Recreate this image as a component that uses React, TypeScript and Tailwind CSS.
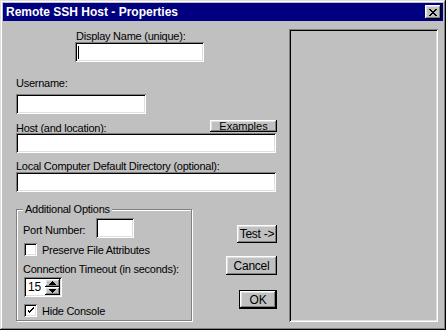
import React from 'react';

const raised =
  'bg-[#c0c0c0] shadow-[inset_-1px_-1px_#000,inset_1px_1px_#fff,inset_-2px_-2px_#808080,inset_2px_2px_#dfdfdf]';
const sunken =
  'shadow-[inset_1px_1px_#808080,inset_-1px_-1px_#fff,inset_2px_2px_#000,inset_-2px_-2px_#dfdfdf]';

const TextBox = ({ className = '', cursor = false }: { className?: string; cursor?: boolean }) => (
  <div className={`bg-white h-[20px] ${sunken} ${className} flex items-center`}>
    {cursor && <div className="ml-[3px] w-px h-[13px] bg-black" />}
  </div>
);

const Button = ({ label, className = '' }: { label: string; className?: string }) => (
  <button className={`${raised} flex items-center justify-center leading-none ${className}`}>{label}</button>
);

const CheckBox = ({ checked = false }: { checked?: boolean }) => (
  <div className={`w-[13px] h-[13px] bg-white ${sunken} flex items-center justify-center shrink-0`}>
    {checked && (
      <svg width="7" height="7" viewBox="0 0 7 7" shapeRendering="crispEdges">
        <path d="M0 2h1v3h1v1h1v-1h1v-1h1v-1h1v-1h1v-2h-1v1h-1v1h-1v1h-1v1h-1v-1h-1v-1h-1z" fill="#000" />
      </svg>
    )}
  </div>
);

const Spinner = () => (
  <div className={`w-[38px] h-[20px] bg-white ${sunken} flex p-[2px]`}>
    <span className="flex-1 pl-[2px] text-[12px] leading-[16px]">15</span>
    <div className="w-[15px] flex flex-col">
      <div className={`${raised} flex-1 flex items-center justify-center`}>
        <svg width="7" height="4" viewBox="0 0 7 4" shapeRendering="crispEdges">
          <path d="M3 0h1v1h1v1h1v1h1v1h-7v-1h1v-1h1v-1h1z" fill="#000" />
        </svg>
      </div>
      <div className={`${raised} flex-1 flex items-center justify-center`}>
        <svg width="7" height="4" viewBox="0 0 7 4" shapeRendering="crispEdges">
          <path d="M0 0h7v1h-1v1h-1v1h-1v1h-1v-1h-1v-1h-1v-1h-1z" fill="#000" />
        </svg>
      </div>
    </div>
  </div>
);

export default function App() {
  return (
    <div
      className="w-[446px] h-[330px] bg-[#c0c0c0] p-[3px] flex flex-col text-[11px] tracking-[-0.25px] text-black font-['Liberation_Sans',Arial,sans-serif] shadow-[inset_-1px_-1px_#000,inset_1px_1px_#dfdfdf,inset_-2px_-2px_#808080,inset_2px_2px_#fff]"
    >
      {/* title bar */}
      <div className="h-[18px] bg-[#000080] flex items-center justify-between pl-[3px] pr-[2px]">
        <span className="text-white font-bold text-[12px] tracking-normal leading-none">Remote SSH Host - Properties</span>
        <div className={`${raised} w-[16px] h-[14px] flex items-center justify-center`}>
          <svg width="8" height="7" viewBox="0 0 8 7" shapeRendering="crispEdges">
            <path d="M0 0h2v1h1v1h2v-1h1v-1h2v1h-1v1h-1v1h-1v1h1v1h1v1h1v1h-2v-1h-1v-1h-2v1h-1v1h-2v-1h1v-1h1v-1h1v-1h-1v-1h-1v-1h-1z" fill="#000" />
          </svg>
        </div>
      </div>

      {/* body */}
      <div className="flex flex-1 pt-[8px] pl-[13px] pr-[5px] pb-[5px]">
        <div className="w-[261px] flex flex-col">
          <div className="ml-[59px] flex flex-col">
            <label className="mt-[1px] pl-[1px] leading-[12px]">Display Name (unique):</label>
            <TextBox className="w-[129px]" cursor />
          </div>

          <label className="mt-[15px] leading-[12px]">Username:</label>
          <TextBox className="w-[130px] mt-[5px]" />

          <div className="mt-[6px] h-[13px] flex justify-between items-start">
            <label className="pt-[2px] leading-[12px]">Host (and location):</label>
            <Button label="Examples" className="w-[67px] h-[12px] pt-px tracking-normal" />
          </div>
          <TextBox className="w-[260px]" />

          <label className="mt-[7px] leading-[12px]">Local Computer Default Directory (optional):</label>
          <TextBox className="w-[260px]" />

          <div className="mt-[17px] flex">
            {/* group box */}
            <div className="relative w-[176px] h-[112px] border border-[#808080] shadow-[inset_1px_1px_#fff,1px_1px_#fff] pl-[6px] flex flex-col">
              <span className="absolute -top-[7px] left-[6px] px-[2px] bg-[#c0c0c0] leading-[12px]">Additional Options</span>
              <div className="mt-[8px] flex items-end">
                <span className="mb-[2px] leading-[12px] w-[73px]">Port Number:</span>
                <TextBox className="w-[38px]" />
              </div>
              <div className="mt-[5px] ml-px flex items-center gap-[5px]">
                <CheckBox />
                <span className="leading-[12px]">Preserve File Attributes</span>
              </div>
              <label className="mt-[7px] leading-[12px]">Connection Timeout (in seconds):</label>
              <div className="mt-[2px] ml-px">
                <Spinner />
              </div>
              <div className="mt-[7px] ml-px flex items-center gap-[5px]">
                <CheckBox checked />
                <span className="leading-[12px]">Hide Console</span>
              </div>
            </div>

            {/* buttons */}
            <div className="ml-auto flex flex-col items-end">
              <Button label="Test ->" className="mt-[16px] w-[40px] h-[18px] text-[12px]" />
              <Button label="Cancel" className="mt-[13px] w-[51px] h-[19px] text-[12px]" />
              <div className="mt-[15px] w-[38px] h-[19px] border border-black flex">
                <Button label="OK" className="flex-1 text-[12px]" />
              </div>
            </div>
          </div>
        </div>

        {/* preview panel */}
        <div className={`ml-auto w-[149px] h-[293px] ${sunken}`} />
      </div>
    </div>
  );
}
